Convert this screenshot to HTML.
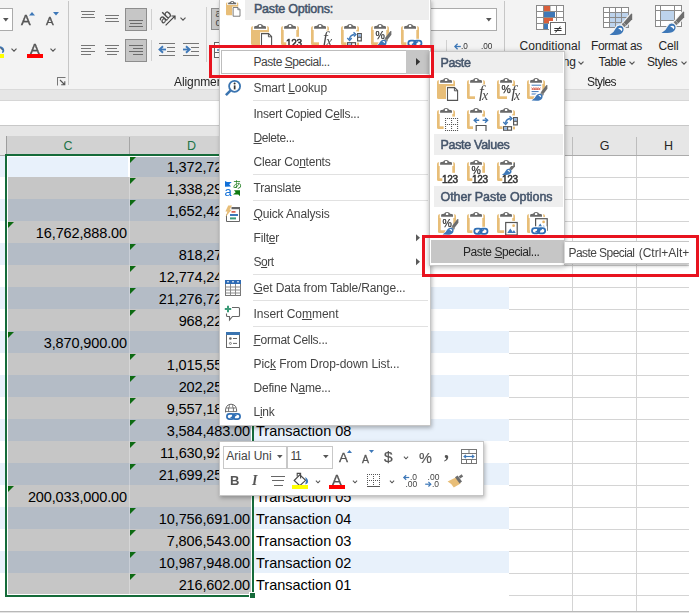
<!DOCTYPE html>
<html lang="en"><head><meta charset="utf-8"><title>Excel Paste Special</title>
<style>
html,body{margin:0;padding:0;background:#fff;}
body{width:700px;height:613px;overflow:hidden;position:relative;font-family:"Liberation Sans",sans-serif;font-size:12px;color:#444;}
.a{position:absolute;}
.t{position:absolute;white-space:nowrap;line-height:16px;height:16px;}
.ui{font-size:12px;color:#444;}
.cell{position:absolute;white-space:nowrap;font-size:14.5px;letter-spacing:0;line-height:22px;height:22px;color:#000;}
.num{text-align:right;letter-spacing:-0.12px;}
.sep{position:absolute;height:1px;background:#e1e1e1;left:253px;width:175px;}
.hd{position:absolute;font-weight:bold;color:#44546a;font-size:12.5px;line-height:16px;white-space:nowrap;}
u{text-decoration:underline;text-underline-offset:1px;text-decoration-thickness:1px;}
svg{position:absolute;overflow:visible;}
</style></head>
<body>
<div class="a" style="left:0px;top:0px;width:689px;height:89px;background:#f3f3f3;"></div>
<div class="a" style="left:0px;top:89px;width:689px;height:1px;background:#dadada;"></div>
<div class="a" style="left:0px;top:90px;width:689px;height:10px;background:#e6e6e6;"></div>
<div class="a" style="left:0px;top:100px;width:689px;height:25px;background:#fff;"></div>
<div class="a" style="left:0px;top:100px;width:689px;height:1px;background:#d6d6d6;"></div>
<div class="a" style="left:0px;top:125px;width:689px;height:1px;background:#c8c8c8;"></div>
<div class="a" style="left:0px;top:126px;width:689px;height:10px;background:#e6e6e6;"></div>
<div class="a" style="left:-2px;top:8px;width:15px;height:23px;background:#fff;border:1px solid #ababab;box-sizing:border-box;"></div>
<svg style="left:2.7px;top:17.7px;will-change:transform" width="6" height="4" viewBox="0 0 6 4" ><path d="M0 0H5.6L2.8 3.4Z" fill="#555"/></svg>
<div class="t" style="left:21px;top:12.3px;font-size:14.5px;color:#555;-webkit-text-stroke:0.4px #555;will-change:transform;">A</div>
<svg style="left:28.6px;top:12px;will-change:transform" width="6" height="3.5" viewBox="0 0 6 3.5" ><path d="M0 3.5L3 0L6 3.5Z" fill="#3e78b8"/></svg>
<div class="t" style="left:46.2px;top:13.399999999999999px;font-size:11.5px;color:#555;-webkit-text-stroke:0.4px #555;will-change:transform;">A</div>
<svg style="left:52.6px;top:12px;will-change:transform" width="6" height="3.5" viewBox="0 0 6 3.5" ><path d="M0 0H6L3 3.5Z" fill="#3e78b8"/></svg>
<svg style="left:0px;top:45px;will-change:transform" width="5" height="9" viewBox="0 0 5 9" ><path d="M0 1.2Q4.2 1.6 4.3 6Q3.8 8.2 2 8L2.4 5.2L0 2.8Z" fill="#3e78b8"/><path d="M0 2.4L2.6 5" stroke="#555" stroke-width="1" fill="none"/></svg>
<div class="a" style="left:0px;top:54px;width:4px;height:4px;background:#ffff00;"></div>
<svg style="left:11px;top:48px;will-change:transform" width="6" height="4" viewBox="0 0 6 4" ><path d="M0.5 0.6L3 3.1L5.5 0.6" fill="none" stroke="#555" stroke-width="1.15"/></svg>
<div class="t" style="left:30.3px;top:41.3px;font-size:14.5px;color:#555;-webkit-text-stroke:0.4px #555;will-change:transform;">A</div>
<div class="a" style="left:27px;top:54px;width:16px;height:4px;background:#ff0000;"></div>
<svg style="left:50px;top:48px;will-change:transform" width="6" height="4" viewBox="0 0 6 4" ><path d="M0.5 0.6L3 3.1L5.5 0.6" fill="none" stroke="#555" stroke-width="1.15"/></svg>
<svg style="left:57px;top:77px;will-change:transform" width="9" height="9" viewBox="0 0 9 9" ><path d="M0.5 3V0.5H3M0.5 0.5" fill="none" stroke="#666" stroke-width="1"/><path d="M0.5 8.5V0.5H8.5" fill="none" stroke="#777" stroke-width="1"/><path d="M3 3L7.5 7.5M7.8 4.2V7.8H4.2" fill="none" stroke="#555" stroke-width="1.1"/></svg>
<div class="a" style="left:68px;top:1px;width:1px;height:84px;background:#c6c6c6;"></div>
<div class="a" style="left:81px;top:11px;width:14px;height:1px;background:#767676;"></div>
<div class="a" style="left:82px;top:14px;width:12px;height:1px;background:#767676;"></div>
<div class="a" style="left:81px;top:17px;width:14px;height:1px;background:#767676;"></div>
<div class="a" style="left:105px;top:15px;width:14px;height:1px;background:#767676;"></div>
<div class="a" style="left:106px;top:18px;width:12px;height:1px;background:#767676;"></div>
<div class="a" style="left:105px;top:21px;width:14px;height:1px;background:#767676;"></div>
<div class="a" style="left:125px;top:8px;width:22px;height:23px;background:#c6c6c6;border:1px solid #8d8d8d;box-sizing:border-box;"></div>
<div class="a" style="left:129px;top:20px;width:14px;height:1px;background:#6a6a6a;"></div>
<div class="a" style="left:130px;top:23px;width:12px;height:1px;background:#6a6a6a;"></div>
<div class="a" style="left:129px;top:26px;width:14px;height:1px;background:#6a6a6a;"></div>
<div class="a" style="left:151px;top:9px;width:1px;height:21px;background:#d0d0d0;"></div>
<div class="a" style="left:81px;top:45px;width:14px;height:1px;background:#767676;"></div>
<div class="a" style="left:81px;top:48px;width:10px;height:1px;background:#767676;"></div>
<div class="a" style="left:81px;top:51px;width:14px;height:1px;background:#767676;"></div>
<div class="a" style="left:81px;top:54px;width:10px;height:1px;background:#767676;"></div>
<div class="a" style="left:105px;top:45px;width:14px;height:1px;background:#767676;"></div>
<div class="a" style="left:107px;top:48px;width:10px;height:1px;background:#767676;"></div>
<div class="a" style="left:105px;top:51px;width:14px;height:1px;background:#767676;"></div>
<div class="a" style="left:107px;top:54px;width:10px;height:1px;background:#767676;"></div>
<div class="a" style="left:125px;top:39px;width:22px;height:23px;background:#c6c6c6;border:1px solid #8d8d8d;box-sizing:border-box;"></div>
<div class="a" style="left:129px;top:45px;width:14px;height:1px;background:#6a6a6a;"></div>
<div class="a" style="left:133px;top:48px;width:10px;height:1px;background:#6a6a6a;"></div>
<div class="a" style="left:129px;top:51px;width:14px;height:1px;background:#6a6a6a;"></div>
<div class="a" style="left:133px;top:54px;width:10px;height:1px;background:#6a6a6a;"></div>
<div class="a" style="left:151px;top:40px;width:1px;height:21px;background:#d0d0d0;"></div>
<svg style="left:154px;top:5px;will-change:transform" width="26" height="24" viewBox="0 0 26 24" ><text x="0" y="0" transform="translate(8.9 19.2) rotate(-45)" font-family="Liberation Sans, sans-serif" font-size="12" fill="#444" stroke="#444" stroke-width="0.3">ab</text><path d="M11.6 20.4L20.6 11.4M17.4 11H21V14.6" fill="none" stroke="#444" stroke-width="1.2"/></svg>
<svg style="left:180px;top:17px;will-change:transform" width="6" height="4" viewBox="0 0 6 4" ><path d="M0.5 0.6L3 3.1L5.5 0.6" fill="none" stroke="#555" stroke-width="1.15"/></svg>
<div class="a" style="left:159px;top:43px;width:16px;height:1px;background:#767676;"></div>
<div class="a" style="left:159px;top:55px;width:16px;height:1px;background:#767676;"></div>
<div class="a" style="left:167px;top:47px;width:8px;height:1px;background:#767676;"></div>
<div class="a" style="left:167px;top:51px;width:8px;height:1px;background:#767676;"></div>
<svg style="left:159px;top:46px;will-change:transform" width="7" height="7" viewBox="0 0 7 7" ><path d="M1.6 3.5H7" stroke="#3e78b8" stroke-width="1.8" fill="none"/><path d="M4 0.2L0.5 3.5L4 6.8" fill="none" stroke="#3e78b8" stroke-width="1.9"/></svg>
<div class="a" style="left:183px;top:43px;width:16px;height:1px;background:#767676;"></div>
<div class="a" style="left:183px;top:55px;width:16px;height:1px;background:#767676;"></div>
<div class="a" style="left:191px;top:47px;width:8px;height:1px;background:#767676;"></div>
<div class="a" style="left:191px;top:51px;width:8px;height:1px;background:#767676;"></div>
<svg style="left:183px;top:46px;will-change:transform" width="7" height="7" viewBox="0 0 7 7" ><path d="M0 3.5H5.4" stroke="#3e78b8" stroke-width="1.8" fill="none"/><path d="M3 0.2L6.6 3.5L3 6.8" fill="none" stroke="#3e78b8" stroke-width="1.9"/></svg>
<div class="a" style="left:206px;top:7px;width:1px;height:55px;background:#d0d0d0;"></div>
<div class="a" style="left:211px;top:8px;width:30px;height:22px;background:#c6c6c6;border:1px solid #8d8d8d;box-sizing:border-box;"></div>
<div class="t" style="left:215.5px;top:6px;font-size:10px;color:#444;">ab</div>
<div class="t" style="left:215.5px;top:15px;font-size:10px;color:#444;">c</div>
<svg style="left:214px;top:42px;will-change:transform" width="16" height="16" viewBox="0 0 16 16" ><rect x="0.5" y="0.5" width="15" height="15" fill="#fff" stroke="#666"/><path d="M0.5 5.5H15.5M0.5 10.5H15.5" stroke="#666" fill="none"/><path d="M3 8H12" stroke="#3e78b8" stroke-width="1.4"/></svg>
<div class="t" style="left:174px;top:73.5px;font-size:12px;color:#262626;letter-spacing:-0.096px;">Alignment</div>
<div class="a" style="left:430px;top:8px;width:67px;height:23px;background:#fff;border:1px solid #ababab;box-sizing:border-box;"></div>
<svg style="left:486.2px;top:17.7px;will-change:transform" width="6" height="4" viewBox="0 0 6 4" ><path d="M0 0H5.6L2.8 3.4Z" fill="#555"/></svg>
<div class="a" style="left:446px;top:40px;width:1px;height:12px;background:#d0d0d0;"></div>
<div class="a" style="left:504px;top:1px;width:1px;height:50px;background:#c6c6c6;"></div>
<svg style="left:454px;top:42.6px;will-change:transform" width="8" height="8" viewBox="0 0 8 8" ><path d="M1.2 3.5H6.8" stroke="#3e78b8" stroke-width="1.3" fill="none"/><path d="M3.6 0.8L0.9 3.5L3.6 6.2" fill="none" stroke="#3e78b8" stroke-width="1.3"/></svg>
<div class="t" style="left:461.3px;top:38.6px;font-size:8.2px;color:#333;will-change:transform;">.0</div>
<div class="t" style="left:480.6px;top:38.6px;font-size:8.2px;color:#333;will-change:transform;">.00</div>
<div class="t" style="left:519.5px;top:38px;font-size:12px;color:#262626;letter-spacing:0.087px;">Conditional</div>
<div class="t" style="left:519px;top:54px;font-size:12px;color:#262626;letter-spacing:-0.035px;">Formatting</div>
<svg style="left:578px;top:60.5px;will-change:transform" width="6" height="4" viewBox="0 0 6 4" ><path d="M0.5 0.6L3 3.1L5.5 0.6" fill="none" stroke="#555" stroke-width="1.15"/></svg>
<div class="t" style="left:591px;top:38px;font-size:12px;color:#262626;letter-spacing:-0.335px;">Format as</div>
<div class="t" style="left:598.5px;top:54px;font-size:12px;color:#262626;letter-spacing:-0.338px;">Table</div>
<svg style="left:628.5px;top:60.5px;will-change:transform" width="6" height="4" viewBox="0 0 6 4" ><path d="M0.5 0.6L3 3.1L5.5 0.6" fill="none" stroke="#555" stroke-width="1.15"/></svg>
<div class="t" style="left:658.5px;top:38px;font-size:12px;color:#262626;letter-spacing:-0.168px;">Cell</div>
<div class="t" style="left:647px;top:54px;font-size:12px;color:#262626;letter-spacing:-0.446px;">Styles</div>
<svg style="left:680.5px;top:60.5px;will-change:transform" width="6" height="4" viewBox="0 0 6 4" ><path d="M0.5 0.6L3 3.1L5.5 0.6" fill="none" stroke="#555" stroke-width="1.15"/></svg>
<div class="t" style="left:587px;top:74px;font-size:12px;color:#262626;letter-spacing:-0.613px;">Styles</div>
<svg style="left:536px;top:5px;will-change:transform" width="31" height="31" viewBox="0 0 31 31" ><rect x="0.5" y="0.5" width="27" height="24" fill="#fff" stroke="#8a8a8a"/><path d="M7.5 0.5V24.5M14 0.5V24.5M20.5 0.5V24.5M0.5 6.5H27.5M0.5 12.5H27.5M0.5 18.5H27.5" stroke="#8a8a8a" fill="none"/><rect x="8" y="1" width="6" height="5" fill="#d95f3b"/><rect x="8" y="7" width="11" height="5" fill="#3e78b8"/><rect x="8" y="13" width="9" height="5" fill="#d95f3b"/><rect x="8" y="19" width="4" height="5" fill="#3e78b8"/><rect x="13" y="16" width="15" height="9" fill="#fff"/><rect x="14.5" y="17.5" width="15" height="12" fill="#fff" stroke="#6a6a6a"/><text x="22" y="28" text-anchor="middle" font-family="DejaVu Sans, sans-serif" font-size="11.5" fill="#333">≠</text></svg>
<svg style="left:603px;top:7px;will-change:transform" width="32" height="30" viewBox="0 0 32 30" ><rect x="0.5" y="0.5" width="25" height="20" fill="#fff" stroke="#8a8a8a"/><rect x="7" y="6" width="18" height="14" fill="#bdd3ec"/><path d="M6.5 0.5V20.5M12.5 0.5V20.5M18.5 0.5V20.5M0.5 5.5H25.5M0.5 10.5H25.5M0.5 15.5H25.5" stroke="#8a8a8a" fill="none"/><g transform="translate(6.5 6)"><path d="M14.2 9.4L21.4 0.9Q22.6 -0.2 22.7 1.4V6.2L16.8 12.4ZM12.2 11.2L13.9 9.6L16.5 12.6L14.9 14.2ZM0 22Q4.5 19.5 6.2 15.4Q8.3 11.3 12.2 13Q15.4 15.6 13.3 19Q11.5 22 6 22Z" fill="#f3f3f3" stroke="#f3f3f3" stroke-width="2.2" stroke-linejoin="round"/><path d="M14.2 9.4L21.4 0.9Q22.6 -0.2 22.7 1.4V6.2L16.8 12.4Z" fill="#6d6d6d"/><path d="M12.2 11.2L13.9 9.6L16.5 12.6L14.9 14.2Z" fill="#7a7a7a"/><path d="M0 22Q4.5 19.5 6.2 15.4Q8.3 11.3 12.2 13Q15.4 15.6 13.3 19Q11.5 22 6 22Z" fill="#3e78b8"/><path d="M8.6 15.6Q10.6 13.9 12.3 15.3Q13.4 16.8 12.2 18.2Q11 16.2 8.6 15.6Z" fill="#fff"/></g></svg>
<svg style="left:655px;top:5px;will-change:transform" width="32" height="30" viewBox="0 0 32 30" ><rect x="0.5" y="0.5" width="26" height="21" fill="#fff" stroke="#8a8a8a"/><rect x="6" y="6" width="13" height="9.5" fill="#bdd3ec"/><path d="M5.5 0.5V21.5M19.5 0.5V21.5M0.5 5.5H26.5M0.5 15.5H26.5" stroke="#8a8a8a" fill="none"/><g transform="translate(6.5 6)"><path d="M14.2 9.4L21.4 0.9Q22.6 -0.2 22.7 1.4V6.2L16.8 12.4ZM12.2 11.2L13.9 9.6L16.5 12.6L14.9 14.2ZM0 22Q4.5 19.5 6.2 15.4Q8.3 11.3 12.2 13Q15.4 15.6 13.3 19Q11.5 22 6 22Z" fill="#f3f3f3" stroke="#f3f3f3" stroke-width="2.2" stroke-linejoin="round"/><path d="M14.2 9.4L21.4 0.9Q22.6 -0.2 22.7 1.4V6.2L16.8 12.4Z" fill="#6d6d6d"/><path d="M12.2 11.2L13.9 9.6L16.5 12.6L14.9 14.2Z" fill="#7a7a7a"/><path d="M0 22Q4.5 19.5 6.2 15.4Q8.3 11.3 12.2 13Q15.4 15.6 13.3 19Q11.5 22 6 22Z" fill="#3e78b8"/><path d="M8.6 15.6Q10.6 13.9 12.3 15.3Q13.4 16.8 12.2 18.2Q11 16.2 8.6 15.6Z" fill="#fff"/></g></svg>
<div class="a" style="left:0px;top:136px;width:6px;height:19px;background:#e6e6e6;"></div>
<div class="a" style="left:0px;top:155px;width:6px;height:1px;background:#ababab;"></div>
<div class="a" style="left:6px;top:136px;width:1px;height:19px;background:#9e9e9e;"></div>
<div class="a" style="left:7px;top:136px;width:247px;height:18px;background:#d2d2d2;"></div>
<div class="a" style="left:129px;top:137px;width:1px;height:17px;background:#a6a6a6;"></div>
<div class="a" style="left:254px;top:136px;width:435px;height:19px;background:#e6e6e6;"></div>
<div class="a" style="left:254px;top:155px;width:435px;height:1px;background:#ababab;"></div>
<div class="a" style="left:572px;top:137px;width:1px;height:18px;background:#bdbdbd;"></div>
<div class="a" style="left:636px;top:137px;width:1px;height:18px;background:#bdbdbd;"></div>
<div class="t" style="left:7px;top:137px;width:122px;color:#217346;font-size:12.5px;line-height:18px;height:18px;text-align:center;">C</div>
<div class="t" style="left:130px;top:137px;width:123px;color:#217346;font-size:12.5px;line-height:18px;height:18px;text-align:center;">D</div>
<div class="t" style="left:573px;top:137px;width:63px;color:#262626;font-size:12.5px;line-height:18px;height:18px;text-align:center;">G</div>
<div class="t" style="left:637px;top:137px;width:63px;color:#262626;font-size:12.5px;line-height:18px;height:18px;text-align:center;">H</div>
<div class="a" style="left:509px;top:177px;width:180px;height:1px;background:#d4d4d4;"></div>
<div class="a" style="left:509px;top:199px;width:180px;height:1px;background:#d4d4d4;"></div>
<div class="a" style="left:509px;top:221px;width:180px;height:1px;background:#d4d4d4;"></div>
<div class="a" style="left:509px;top:243px;width:180px;height:1px;background:#d4d4d4;"></div>
<div class="a" style="left:509px;top:265px;width:180px;height:1px;background:#d4d4d4;"></div>
<div class="a" style="left:509px;top:287px;width:180px;height:1px;background:#d4d4d4;"></div>
<div class="a" style="left:509px;top:309px;width:180px;height:1px;background:#d4d4d4;"></div>
<div class="a" style="left:509px;top:331px;width:180px;height:1px;background:#d4d4d4;"></div>
<div class="a" style="left:509px;top:353px;width:180px;height:1px;background:#d4d4d4;"></div>
<div class="a" style="left:509px;top:375px;width:180px;height:1px;background:#d4d4d4;"></div>
<div class="a" style="left:509px;top:397px;width:180px;height:1px;background:#d4d4d4;"></div>
<div class="a" style="left:509px;top:419px;width:180px;height:1px;background:#d4d4d4;"></div>
<div class="a" style="left:509px;top:441px;width:180px;height:1px;background:#d4d4d4;"></div>
<div class="a" style="left:509px;top:463px;width:180px;height:1px;background:#d4d4d4;"></div>
<div class="a" style="left:509px;top:485px;width:180px;height:1px;background:#d4d4d4;"></div>
<div class="a" style="left:509px;top:507px;width:180px;height:1px;background:#d4d4d4;"></div>
<div class="a" style="left:509px;top:529px;width:180px;height:1px;background:#d4d4d4;"></div>
<div class="a" style="left:509px;top:551px;width:180px;height:1px;background:#d4d4d4;"></div>
<div class="a" style="left:509px;top:573px;width:180px;height:1px;background:#d4d4d4;"></div>
<div class="a" style="left:509px;top:595px;width:180px;height:1px;background:#d4d4d4;"></div>
<div class="a" style="left:572px;top:156px;width:1px;height:455px;background:#d4d4d4;"></div>
<div class="a" style="left:636px;top:156px;width:1px;height:455px;background:#d4d4d4;"></div>
<div class="a" style="left:0px;top:611px;width:689px;height:1px;background:#b8b8b8;"></div>
<div class="a" style="left:0px;top:612px;width:689px;height:1px;background:#e4e4e4;"></div>
<div class="a" style="left:0px;top:156px;width:5px;height:21px;background:#e8f1fb;"></div>
<div class="a" style="left:254px;top:155px;width:255px;height:22px;background:#e8f1fb;"></div>
<div class="a" style="left:7px;top:155px;width:245px;height:22px;background:#b4bcc6;"></div>
<div class="cell num" style="left:131px;top:156px;width:119px;">1,372,725.00</div>
<svg style="left:130px;top:157px" width="6" height="6" viewBox="0 0 6 6"><path d="M0 0H6L0 6Z" fill="#0d6a12"/></svg>
<div class="cell" style="left:256px;top:156px;">Transaction 20</div>
<div class="a" style="left:7px;top:177px;width:245px;height:22px;background:#c6c6c6;"></div>
<div class="cell num" style="left:131px;top:178px;width:119px;">1,338,294.00</div>
<svg style="left:130px;top:178px" width="6" height="6" viewBox="0 0 6 6"><path d="M0 0H6L0 6Z" fill="#0d6a12"/></svg>
<div class="cell" style="left:256px;top:178px;">Transaction 19</div>
<div class="a" style="left:0px;top:199px;width:5px;height:22px;background:#e8f1fb;"></div>
<div class="a" style="left:254px;top:199px;width:255px;height:22px;background:#e8f1fb;"></div>
<div class="a" style="left:7px;top:199px;width:245px;height:22px;background:#b4bcc6;"></div>
<div class="cell num" style="left:131px;top:200px;width:119px;">1,652,421.00</div>
<svg style="left:130px;top:200px" width="6" height="6" viewBox="0 0 6 6"><path d="M0 0H6L0 6Z" fill="#0d6a12"/></svg>
<div class="cell" style="left:256px;top:200px;">Transaction 18</div>
<div class="a" style="left:7px;top:221px;width:245px;height:22px;background:#c6c6c6;"></div>
<div class="cell num" style="left:8px;top:222px;width:119px;">16,762,888.00</div>
<svg style="left:8px;top:222px" width="6" height="6" viewBox="0 0 6 6"><path d="M0 0H6L0 6Z" fill="#0d6a12"/></svg>
<div class="cell" style="left:256px;top:222px;">Transaction 17</div>
<div class="a" style="left:0px;top:243px;width:5px;height:22px;background:#e8f1fb;"></div>
<div class="a" style="left:254px;top:243px;width:255px;height:22px;background:#e8f1fb;"></div>
<div class="a" style="left:7px;top:243px;width:245px;height:22px;background:#b4bcc6;"></div>
<div class="cell num" style="left:131px;top:244px;width:119px;">818,273.00</div>
<svg style="left:130px;top:244px" width="6" height="6" viewBox="0 0 6 6"><path d="M0 0H6L0 6Z" fill="#0d6a12"/></svg>
<div class="cell" style="left:256px;top:244px;">Transaction 16</div>
<div class="a" style="left:7px;top:265px;width:245px;height:22px;background:#c6c6c6;"></div>
<div class="cell num" style="left:131px;top:266px;width:119px;">12,774,245.00</div>
<svg style="left:130px;top:266px" width="6" height="6" viewBox="0 0 6 6"><path d="M0 0H6L0 6Z" fill="#0d6a12"/></svg>
<div class="cell" style="left:256px;top:266px;">Transaction 15</div>
<div class="a" style="left:0px;top:287px;width:5px;height:22px;background:#e8f1fb;"></div>
<div class="a" style="left:254px;top:287px;width:255px;height:22px;background:#e8f1fb;"></div>
<div class="a" style="left:7px;top:287px;width:245px;height:22px;background:#b4bcc6;"></div>
<div class="cell num" style="left:131px;top:288px;width:119px;">21,276,728.00</div>
<svg style="left:130px;top:288px" width="6" height="6" viewBox="0 0 6 6"><path d="M0 0H6L0 6Z" fill="#0d6a12"/></svg>
<div class="cell" style="left:256px;top:288px;">Transaction 14</div>
<div class="a" style="left:7px;top:309px;width:245px;height:22px;background:#c6c6c6;"></div>
<div class="cell num" style="left:131px;top:310px;width:119px;">968,226.00</div>
<svg style="left:130px;top:310px" width="6" height="6" viewBox="0 0 6 6"><path d="M0 0H6L0 6Z" fill="#0d6a12"/></svg>
<div class="cell" style="left:256px;top:310px;">Transaction 13</div>
<div class="a" style="left:0px;top:331px;width:5px;height:22px;background:#e8f1fb;"></div>
<div class="a" style="left:254px;top:331px;width:255px;height:22px;background:#e8f1fb;"></div>
<div class="a" style="left:7px;top:331px;width:245px;height:22px;background:#b4bcc6;"></div>
<div class="cell num" style="left:8px;top:332px;width:119px;">3,870,900.00</div>
<svg style="left:8px;top:332px" width="6" height="6" viewBox="0 0 6 6"><path d="M0 0H6L0 6Z" fill="#0d6a12"/></svg>
<div class="cell" style="left:256px;top:332px;">Transaction 12</div>
<div class="a" style="left:7px;top:353px;width:245px;height:22px;background:#c6c6c6;"></div>
<div class="cell num" style="left:131px;top:354px;width:119px;">1,015,553.00</div>
<svg style="left:130px;top:354px" width="6" height="6" viewBox="0 0 6 6"><path d="M0 0H6L0 6Z" fill="#0d6a12"/></svg>
<div class="cell" style="left:256px;top:354px;">Transaction 11</div>
<div class="a" style="left:0px;top:375px;width:5px;height:22px;background:#e8f1fb;"></div>
<div class="a" style="left:254px;top:375px;width:255px;height:22px;background:#e8f1fb;"></div>
<div class="a" style="left:7px;top:375px;width:245px;height:22px;background:#b4bcc6;"></div>
<div class="cell num" style="left:131px;top:376px;width:119px;">202,257.00</div>
<svg style="left:130px;top:376px" width="6" height="6" viewBox="0 0 6 6"><path d="M0 0H6L0 6Z" fill="#0d6a12"/></svg>
<div class="cell" style="left:256px;top:376px;">Transaction 10</div>
<div class="a" style="left:7px;top:397px;width:245px;height:22px;background:#c6c6c6;"></div>
<div class="cell num" style="left:131px;top:398px;width:119px;">9,557,184.00</div>
<svg style="left:130px;top:398px" width="6" height="6" viewBox="0 0 6 6"><path d="M0 0H6L0 6Z" fill="#0d6a12"/></svg>
<div class="cell" style="left:256px;top:398px;">Transaction 09</div>
<div class="a" style="left:0px;top:419px;width:5px;height:22px;background:#e8f1fb;"></div>
<div class="a" style="left:254px;top:419px;width:255px;height:22px;background:#e8f1fb;"></div>
<div class="a" style="left:7px;top:419px;width:245px;height:22px;background:#b4bcc6;"></div>
<div class="cell num" style="left:131px;top:420px;width:119px;">3,584,483.00</div>
<svg style="left:130px;top:420px" width="6" height="6" viewBox="0 0 6 6"><path d="M0 0H6L0 6Z" fill="#0d6a12"/></svg>
<div class="cell" style="left:256px;top:420px;">Transaction 08</div>
<div class="a" style="left:7px;top:441px;width:245px;height:22px;background:#c6c6c6;"></div>
<div class="cell num" style="left:131px;top:442px;width:119px;">11,630,921.00</div>
<svg style="left:130px;top:442px" width="6" height="6" viewBox="0 0 6 6"><path d="M0 0H6L0 6Z" fill="#0d6a12"/></svg>
<div class="cell" style="left:256px;top:442px;">Transaction 07</div>
<div class="a" style="left:0px;top:463px;width:5px;height:22px;background:#e8f1fb;"></div>
<div class="a" style="left:254px;top:463px;width:255px;height:22px;background:#e8f1fb;"></div>
<div class="a" style="left:7px;top:463px;width:245px;height:22px;background:#b4bcc6;"></div>
<div class="cell num" style="left:131px;top:464px;width:119px;">21,699,256.00</div>
<svg style="left:130px;top:464px" width="6" height="6" viewBox="0 0 6 6"><path d="M0 0H6L0 6Z" fill="#0d6a12"/></svg>
<div class="cell" style="left:256px;top:464px;">Transaction 06</div>
<div class="a" style="left:7px;top:485px;width:245px;height:22px;background:#c6c6c6;"></div>
<div class="cell num" style="left:8px;top:486px;width:119px;">200,033,000.00</div>
<svg style="left:8px;top:486px" width="6" height="6" viewBox="0 0 6 6"><path d="M0 0H6L0 6Z" fill="#0d6a12"/></svg>
<div class="cell" style="left:256px;top:486px;">Transaction 05</div>
<div class="a" style="left:0px;top:507px;width:5px;height:22px;background:#e8f1fb;"></div>
<div class="a" style="left:254px;top:507px;width:255px;height:22px;background:#e8f1fb;"></div>
<div class="a" style="left:7px;top:507px;width:245px;height:22px;background:#b4bcc6;"></div>
<div class="cell num" style="left:131px;top:508px;width:119px;">10,756,691.00</div>
<svg style="left:130px;top:508px" width="6" height="6" viewBox="0 0 6 6"><path d="M0 0H6L0 6Z" fill="#0d6a12"/></svg>
<div class="cell" style="left:256px;top:508px;">Transaction 04</div>
<div class="a" style="left:7px;top:529px;width:245px;height:22px;background:#c6c6c6;"></div>
<div class="cell num" style="left:131px;top:530px;width:119px;">7,806,543.00</div>
<svg style="left:130px;top:530px" width="6" height="6" viewBox="0 0 6 6"><path d="M0 0H6L0 6Z" fill="#0d6a12"/></svg>
<div class="cell" style="left:256px;top:530px;">Transaction 03</div>
<div class="a" style="left:0px;top:551px;width:5px;height:22px;background:#e8f1fb;"></div>
<div class="a" style="left:254px;top:551px;width:255px;height:22px;background:#e8f1fb;"></div>
<div class="a" style="left:7px;top:551px;width:245px;height:22px;background:#b4bcc6;"></div>
<div class="cell num" style="left:131px;top:552px;width:119px;">10,987,948.00</div>
<svg style="left:130px;top:552px" width="6" height="6" viewBox="0 0 6 6"><path d="M0 0H6L0 6Z" fill="#0d6a12"/></svg>
<div class="cell" style="left:256px;top:552px;">Transaction 02</div>
<div class="a" style="left:7px;top:573px;width:245px;height:22px;background:#c6c6c6;"></div>
<div class="cell num" style="left:131px;top:574px;width:119px;">216,602.00</div>
<svg style="left:130px;top:574px" width="6" height="6" viewBox="0 0 6 6"><path d="M0 0H6L0 6Z" fill="#0d6a12"/></svg>
<div class="cell" style="left:256px;top:574px;">Transaction 01</div>
<div class="a" style="left:129px;top:157px;width:1px;height:437px;background:rgba(255,255,255,0.28);"></div>
<div class="a" style="left:7px;top:156px;width:122px;height:21px;background:#fff;"></div>
<div class="a" style="left:8px;top:157px;width:120px;height:20px;background:#e8f1fb;"></div>
<div class="a" style="left:128px;top:156px;width:2px;height:21px;background:#fff;"></div>
<div class="a" style="left:5px;top:154px;width:249px;height:2px;background:#156b3a;"></div>
<div class="a" style="left:5px;top:154px;width:2px;height:443px;background:#156b3a;"></div>
<div class="a" style="left:252px;top:154px;width:2px;height:440px;background:#156b3a;"></div>
<div class="a" style="left:5px;top:595px;width:245px;height:2px;background:#156b3a;"></div>
<div class="a" style="left:7px;top:594px;width:243px;height:1px;background:#fff;"></div>
<div class="a" style="left:7px;top:156px;width:1px;height:438px;background:#fff;"></div>
<div class="a" style="left:7px;top:156px;width:245px;height:1px;background:#fff;"></div>
<div class="a" style="left:251px;top:156px;width:1px;height:437px;background:#fff;"></div>
<div class="a" style="left:249px;top:592px;width:6px;height:6px;background:#fff;"></div>
<div class="a" style="left:250px;top:593px;width:5px;height:5px;background:#156b3a;"></div>
<div class="a" style="left:219px;top:441px;width:265px;height:55px;background:#fff;border:1px solid #c6c6c6;box-sizing:border-box;box-shadow:1px 2px 4px rgba(0,0,0,0.28);"></div>
<div class="a" style="left:223px;top:446px;width:64px;height:23px;background:#fff;border:1px solid #c8c8c8;box-sizing:border-box;"></div>
<div class="a" style="left:287px;top:446px;width:46px;height:23px;background:#fff;border:1px solid #c8c8c8;box-sizing:border-box;"></div>
<div class="a" style="left:224px;top:447px;width:47.6px;height:21px;overflow:hidden;"><div class="t" style="left:2.3px;top:0.5px;font-size:12px;color:#444;letter-spacing:0px;">Arial Unicode MS</div></div>
<svg style="left:276.7px;top:455px;will-change:transform" width="6" height="4" viewBox="0 0 6 4" ><path d="M0 0H5.6L2.8 3.2Z" fill="#555"/></svg>
<div class="t" style="left:290.5px;top:447.5px;font-size:12px;color:#444;letter-spacing:-1.229px;">11</div>
<svg style="left:323.2px;top:455px;will-change:transform" width="6" height="4" viewBox="0 0 6 4" ><path d="M0 0H5.6L2.8 3.2Z" fill="#555"/></svg>
<div class="t" style="left:339px;top:450px;font-size:13.5px;color:#555;-webkit-text-stroke:0.3px #555;will-change:transform;">A</div>
<svg style="left:347px;top:450px;will-change:transform" width="5" height="3" viewBox="0 0 5 3" ><path d="M0 3L2.5 0L5 3Z" fill="#3e78b8"/></svg>
<div class="t" style="left:362px;top:451px;font-size:10.5px;color:#555;-webkit-text-stroke:0.3px #555;will-change:transform;">A</div>
<svg style="left:369px;top:450px;will-change:transform" width="5" height="3" viewBox="0 0 5 3" ><path d="M0 0H5L2.5 3Z" fill="#3e78b8"/></svg>
<div class="t" style="left:384.3px;top:449px;font-size:15.5px;color:#555;-webkit-text-stroke:0.25px #555;will-change:transform;">$</div>
<svg style="left:403px;top:455.7px;will-change:transform" width="6" height="4" viewBox="0 0 6 4" ><path d="M0.9 0.7L3 2.8L5.1 0.7" fill="none" stroke="#555" stroke-width="1.05"/></svg>
<div class="t" style="left:419px;top:449.5px;font-size:14.5px;color:#555;-webkit-text-stroke:0.2px #555;will-change:transform;">%</div>
<div class="t" style="left:443.8px;top:443.2px;font-size:20px;color:#555;font-weight:bold;font-family:Liberation Serif,serif;will-change:transform;">,</div>
<svg style="left:461px;top:449px;will-change:transform" width="16" height="15" viewBox="0 0 16 15" ><rect x="0.5" y="0.5" width="15" height="14" fill="#fff" stroke="#777"/><path d="M0.5 4.5H15.5M0.5 10.5H15.5M8 0.5V4.5M5.5 10.5V14.5M10.5 10.5V14.5" stroke="#777" fill="none"/><path d="M3.5 7.5H12.5" stroke="#3e78b8" stroke-width="1.1"/><path d="M5 5.8L3 7.5L5 9.2M11 5.8L13 7.5L11 9.2" fill="none" stroke="#3e78b8" stroke-width="1.1"/></svg>
<div class="t" style="left:229.5px;top:472.5px;font-size:13px;color:#555;font-weight:bold;will-change:transform;">B</div>
<div class="t" style="left:252.3px;top:472.5px;font-size:14px;color:#555;font-weight:bold;font-family:Liberation Serif,serif;font-style:italic;will-change:transform;">I</div>
<div class="a" style="left:271px;top:476px;width:14px;height:1px;background:#666;"></div>
<div class="a" style="left:272px;top:480px;width:12px;height:1px;background:#666;"></div>
<div class="a" style="left:274px;top:485px;width:9px;height:1px;background:#666;"></div>
<svg style="left:292px;top:472px;will-change:transform" width="17" height="14" viewBox="0 0 17 14" ><path d="M2.2 8.5L7.8 2.9L13.6 8.3L7.8 13.6Z" fill="#fff" stroke="#4a4a4a" stroke-width="1.15"/><path d="M5.2 4.4V1.4H8.6V6.4" fill="none" stroke="#4a4a4a" stroke-width="1.1"/><path d="M13.2 5Q17 7.6 15.8 10.8Q14.8 12.6 13.2 12.2Q14.8 9 13.2 5Z" fill="#3e78b8"/></svg>
<div class="a" style="left:292px;top:485px;width:16px;height:4px;background:#ffff00;"></div>
<svg style="left:315px;top:479.7px;will-change:transform" width="6" height="4" viewBox="0 0 6 4" ><path d="M0.9 0.7L3 2.8L5.1 0.7" fill="none" stroke="#555" stroke-width="1.05"/></svg>
<div class="t" style="left:332.2px;top:472.3px;font-size:14.5px;color:#555;-webkit-text-stroke:0.3px #555;will-change:transform;">A</div>
<div class="a" style="left:329px;top:485px;width:16px;height:4px;background:#ff0000;"></div>
<svg style="left:352px;top:479.7px;will-change:transform" width="6" height="4" viewBox="0 0 6 4" ><path d="M0.9 0.7L3 2.8L5.1 0.7" fill="none" stroke="#555" stroke-width="1.05"/></svg>
<svg style="left:367px;top:474px;will-change:transform" width="14" height="13" viewBox="0 0 14 13" ><g fill="none" stroke="#555" stroke-width="1" stroke-dasharray="1 1"><path d="M0 0.5H13M0 6.5H13"/><path d="M0.5 0V12M6.5 0V12M12.5 0V12"/></g><path d="M0 12.5H13" stroke="#555" stroke-width="1"/></svg>
<svg style="left:389px;top:479.7px;will-change:transform" width="6" height="4" viewBox="0 0 6 4" ><path d="M0.9 0.7L3 2.8L5.1 0.7" fill="none" stroke="#555" stroke-width="1.05"/></svg>
<svg style="left:403px;top:474px;will-change:transform" width="16" height="14" viewBox="0 0 16 14" ><path d="M1 3.5H6.2" stroke="#3e78b8" stroke-width="1.2"/><path d="M3.2 1.2L0.8 3.5L3.2 5.8" fill="none" stroke="#3e78b8" stroke-width="1.2"/><text x="7" y="6.2" font-family="Liberation Sans, sans-serif" font-size="8.5" fill="#444">.0</text><text x="2.4" y="13" font-family="Liberation Sans, sans-serif" font-size="8.5" fill="#444">.00</text></svg>
<svg style="left:425px;top:474px;will-change:transform" width="16" height="14" viewBox="0 0 16 14" ><path d="M0.2 10.2H5.4" stroke="#3e78b8" stroke-width="1.2"/><path d="M3.4 7.9L5.8 10.2L3.4 12.5" fill="none" stroke="#3e78b8" stroke-width="1.2"/><text x="2.6" y="6.2" font-family="Liberation Sans, sans-serif" font-size="8.5" fill="#444">.00</text><text x="7" y="13" font-family="Liberation Sans, sans-serif" font-size="8.5" fill="#444">.0</text></svg>
<svg style="left:447px;top:473px;will-change:transform" width="17" height="16" viewBox="0 0 17 16" ><path d="M0.6 8.6L8.8 4.4L13.6 10.6L6.8 14.6Q4.4 10.4 0.6 8.6Z" fill="#e8be78"/><path d="M8 4.2L10.6 2.6L15 8.6L12.6 10.4Z" fill="#6d6d6d"/><path d="M11.6 3.4L14.6 1.2L16.2 3.4L13.2 5.6Z" fill="#6d6d6d"/></svg>
<div class="a" style="left:219px;top:-1px;width:210px;height:425px;background:#fff;border:1px solid #c6c6c6;box-sizing:content-box;box-shadow:1px 2px 4px rgba(0,0,0,0.28);"></div>
<div class="a" style="left:245px;top:0px;width:184px;height:20px;background:#eeeeee;"></div>
<div class="t" style="left:254px;top:0.6999999999999993px;font-size:12.5px;color:#44546a;letter-spacing:-0.213px;-webkit-text-stroke:0.5px #44546a;">Paste Options:</div>
<svg style="left:226px;top:1px;will-change:transform" width="16" height="17" viewBox="0 0 16 17" ><g transform="scale(0.68)"><rect x="0" y="2.2" width="18" height="18.8" rx="1.6" fill="#e8be78"/><path d="M3.1 4.7V3.3Q3.1 2.2 4.4 2.1L6.1 1.7Q6.6 0.1 9.1 0.1Q11.6 0.1 12.1 1.7L13.7 2.1Q15 2.2 15 3.3V4.7Z" fill="#fff" stroke="#fff" stroke-width="2.6"/><path fill="#6a6a6a" fill-rule="evenodd" d="M3.1 4.7V3.3Q3.1 2.2 4.4 2.1L6.1 1.7Q6.6 0.1 9.1 0.1Q11.6 0.1 12.1 1.7L13.7 2.1Q15 2.2 15 3.3V4.7ZM8.6 1.1H9.6Q10.3 1.1 10.3 1.8V2.9H7.9V1.8Q7.9 1.1 8.6 1.1Z"/><rect x="9" y="8.3" width="13" height="15" fill="#fff"/><path d="M10.5 9.6H17.6L20.6 12.6V22.4H10.5Z" fill="#fff" stroke="#555" stroke-width="1.1"/><path d="M17.4 9.8V12.8H20.4" fill="none" stroke="#555" stroke-width="1"/></g></svg>
<svg style="left:251px;top:24px;will-change:transform" width="24" height="25" viewBox="0 0 24 25" ><rect x="0" y="2.2" width="18" height="18.8" rx="1.6" fill="#e8be78"/><path d="M3.1 4.7V3.3Q3.1 2.2 4.4 2.1L6.1 1.7Q6.6 0.1 9.1 0.1Q11.6 0.1 12.1 1.7L13.7 2.1Q15 2.2 15 3.3V4.7Z" fill="#fff" stroke="#fff" stroke-width="2.6"/><path fill="#6a6a6a" fill-rule="evenodd" d="M3.1 4.7V3.3Q3.1 2.2 4.4 2.1L6.1 1.7Q6.6 0.1 9.1 0.1Q11.6 0.1 12.1 1.7L13.7 2.1Q15 2.2 15 3.3V4.7ZM8.6 1.1H9.6Q10.3 1.1 10.3 1.8V2.9H7.9V1.8Q7.9 1.1 8.6 1.1Z"/><rect x="9" y="8.3" width="13" height="15" fill="#fff"/><path d="M10.5 9.6H17.6L20.6 12.6V22.4H10.5Z" fill="#fff" stroke="#555" stroke-width="1.1"/><path d="M17.4 9.8V12.8H20.4" fill="none" stroke="#555" stroke-width="1"/></svg>
<svg style="left:281px;top:24px;will-change:transform" width="24" height="25" viewBox="0 0 24 25" ><rect x="0" y="2.2" width="18" height="18.8" rx="1.6" fill="#e8be78"/><rect x="2.7" y="4" width="12.6" height="14.3" fill="#fff"/><rect x="5.3" y="12.8" width="17" height="11.2" fill="#fff"/><text x="5.1" y="22.9" font-family="Liberation Sans, sans-serif" font-size="10" fill="#333" stroke="#333" stroke-width="0.5" letter-spacing="-0.3">123</text><path d="M3.1 4.7V3.3Q3.1 2.2 4.4 2.1L6.1 1.7Q6.6 0.1 9.1 0.1Q11.6 0.1 12.1 1.7L13.7 2.1Q15 2.2 15 3.3V4.7Z" fill="#fff" stroke="#fff" stroke-width="2.6"/><path fill="#6a6a6a" fill-rule="evenodd" d="M3.1 4.7V3.3Q3.1 2.2 4.4 2.1L6.1 1.7Q6.6 0.1 9.1 0.1Q11.6 0.1 12.1 1.7L13.7 2.1Q15 2.2 15 3.3V4.7ZM8.6 1.1H9.6Q10.3 1.1 10.3 1.8V2.9H7.9V1.8Q7.9 1.1 8.6 1.1Z"/></svg>
<svg style="left:311px;top:24px;will-change:transform" width="24" height="25" viewBox="0 0 24 25" ><rect x="0" y="2.2" width="18" height="18.8" rx="1.6" fill="#e8be78"/><rect x="2.7" y="4" width="12.6" height="14.3" fill="#fff"/><rect x="8" y="6.5" width="14" height="17" fill="#fff"/><text x="12" y="18.8" font-family="Liberation Serif, serif" font-style="italic" font-size="17" fill="#4a4a4a">f</text><text x="14.9" y="21.7" font-family="Liberation Serif, serif" font-style="italic" font-size="14" fill="#4a4a4a">x</text><path d="M3.1 4.7V3.3Q3.1 2.2 4.4 2.1L6.1 1.7Q6.6 0.1 9.1 0.1Q11.6 0.1 12.1 1.7L13.7 2.1Q15 2.2 15 3.3V4.7Z" fill="#fff" stroke="#fff" stroke-width="2.6"/><path fill="#6a6a6a" fill-rule="evenodd" d="M3.1 4.7V3.3Q3.1 2.2 4.4 2.1L6.1 1.7Q6.6 0.1 9.1 0.1Q11.6 0.1 12.1 1.7L13.7 2.1Q15 2.2 15 3.3V4.7ZM8.6 1.1H9.6Q10.3 1.1 10.3 1.8V2.9H7.9V1.8Q7.9 1.1 8.6 1.1Z"/></svg>
<svg style="left:341px;top:24px;will-change:transform" width="24" height="25" viewBox="0 0 24 25" ><rect x="0" y="2.2" width="18" height="18.8" rx="1.6" fill="#e8be78"/><rect x="2.7" y="4" width="12.6" height="14.3" fill="#fff"/><rect x="5.5" y="7.5" width="17" height="16" fill="#fff"/><path d="M8.6 15.2Q8.7 11 13.6 10.5" fill="none" stroke="#3e78b8" stroke-width="1.4"/><path d="M12.5 8.4L14.9 10.5L12.9 12.6" fill="none" stroke="#3e78b8" stroke-width="1.4"/><path d="M6.3 14L8.6 16.4L10.7 14" fill="none" stroke="#3e78b8" stroke-width="1.4"/><rect x="16.6" y="9.6" width="3.7" height="7.3" fill="#fff" stroke="#555" stroke-width="1.2"/><rect x="17.2" y="10.2" width="2.5" height="2.8" fill="#8eb4e3"/><path d="M16.6 13.3H20.3" stroke="#555" stroke-width="1.1"/><rect x="6.6" y="18.7" width="7.9" height="3.5" fill="#fff" stroke="#555" stroke-width="1.2"/><rect x="7.2" y="19.3" width="3" height="2.3" fill="#8eb4e3"/><path d="M10.6 18.7V22.2" stroke="#555" stroke-width="1.1"/><rect x="16" y="18.6" width="2" height="2.8" fill="#e8be78"/><path d="M3.1 4.7V3.3Q3.1 2.2 4.4 2.1L6.1 1.7Q6.6 0.1 9.1 0.1Q11.6 0.1 12.1 1.7L13.7 2.1Q15 2.2 15 3.3V4.7Z" fill="#fff" stroke="#fff" stroke-width="2.6"/><path fill="#6a6a6a" fill-rule="evenodd" d="M3.1 4.7V3.3Q3.1 2.2 4.4 2.1L6.1 1.7Q6.6 0.1 9.1 0.1Q11.6 0.1 12.1 1.7L13.7 2.1Q15 2.2 15 3.3V4.7ZM8.6 1.1H9.6Q10.3 1.1 10.3 1.8V2.9H7.9V1.8Q7.9 1.1 8.6 1.1Z"/></svg>
<svg style="left:371px;top:24px;will-change:transform" width="24" height="25" viewBox="0 0 24 25" ><rect x="0" y="2.2" width="18" height="18.8" rx="1.6" fill="#e8be78"/><rect x="2.7" y="4" width="12.6" height="14.3" fill="#fff"/><text x="4.5" y="15" font-family="Liberation Sans, sans-serif" font-size="10.5" fill="#333" stroke="#333" stroke-width="0.25">%</text><path d="M11.5 19L20 6H22V22H11.5Z" fill="#fff"/><path d="M5 23L9 15.5L17 16L15 23Z" fill="#fff"/><g transform="translate(0 0)"><path d="M13.6 14.6L19.2 7.2Q20.2 6.4 20.4 7.6V10.8L16 16.6Z" fill="#6d6d6d"/><path d="M13.2 15.6L14.6 14.3L16.9 16.3L15.9 17.9Z" fill="#8a8a8a"/><path d="M4.6 22.6Q8 20.6 9.3 17.6Q11.2 14.9 14.3 16.1Q16.5 17.9 15.1 20.4Q13.6 22.8 9.5 22.8Z" fill="#3e78b8"/><path d="M11.2 17.4Q12.8 16.6 13.9 17.6Q14.4 18.6 13.6 19.3Q12.8 18 11.2 17.4Z" fill="#fff"/></g><path d="M3.1 4.7V3.3Q3.1 2.2 4.4 2.1L6.1 1.7Q6.6 0.1 9.1 0.1Q11.6 0.1 12.1 1.7L13.7 2.1Q15 2.2 15 3.3V4.7Z" fill="#fff" stroke="#fff" stroke-width="2.6"/><path fill="#6a6a6a" fill-rule="evenodd" d="M3.1 4.7V3.3Q3.1 2.2 4.4 2.1L6.1 1.7Q6.6 0.1 9.1 0.1Q11.6 0.1 12.1 1.7L13.7 2.1Q15 2.2 15 3.3V4.7ZM8.6 1.1H9.6Q10.3 1.1 10.3 1.8V2.9H7.9V1.8Q7.9 1.1 8.6 1.1Z"/></svg>
<svg style="left:401px;top:24px;will-change:transform" width="24" height="25" viewBox="0 0 24 25" ><rect x="0" y="2.2" width="18" height="18.8" rx="1.6" fill="#e8be78"/><rect x="2.7" y="4" width="12.6" height="14.3" fill="#fff"/><rect x="5.4" y="14.8" width="17" height="9" fill="#fff"/><g transform="translate(0 0)" fill="none" stroke="#2f6fb5" stroke-width="1.75"><rect x="7.3" y="16.6" width="7.4" height="5.2" rx="2.6"/><rect x="13.1" y="16.6" width="7.4" height="5.2" rx="2.6"/></g><path d="M10.8 20.7L17 17.7" stroke="#2f6fb5" stroke-width="1.4"/><path d="M3.1 4.7V3.3Q3.1 2.2 4.4 2.1L6.1 1.7Q6.6 0.1 9.1 0.1Q11.6 0.1 12.1 1.7L13.7 2.1Q15 2.2 15 3.3V4.7Z" fill="#fff" stroke="#fff" stroke-width="2.6"/><path fill="#6a6a6a" fill-rule="evenodd" d="M3.1 4.7V3.3Q3.1 2.2 4.4 2.1L6.1 1.7Q6.6 0.1 9.1 0.1Q11.6 0.1 12.1 1.7L13.7 2.1Q15 2.2 15 3.3V4.7ZM8.6 1.1H9.6Q10.3 1.1 10.3 1.8V2.9H7.9V1.8Q7.9 1.1 8.6 1.1Z"/></svg>
<div class="a" style="left:221px;top:50px;width:206px;height:22px;background:#fff;border:1px solid #bdbdbd;box-sizing:content-box;"></div>
<div class="a" style="left:406px;top:50px;width:23px;height:24px;background:#c6c6c6;"></div>
<svg style="left:416px;top:58px;will-change:transform" width="5" height="8" viewBox="0 0 5 8" ><path d="M0 0L4.2 3.75L0 7.5Z" fill="#333"/></svg>
<div class="t" style="left:253.5px;top:54px;font-size:12px;color:#444;letter-spacing:-0.461px;">Paste <u>S</u>pecial...</div>
<div class="t" style="left:253.5px;top:80px;font-size:12px;color:#444;letter-spacing:-0.101px;">Smart <u>L</u>ookup</div>
<div class="t" style="left:253.5px;top:106px;font-size:12px;color:#444;letter-spacing:-0.245px;">Insert Copied C<u>e</u>lls...</div>
<div class="t" style="left:253.5px;top:130px;font-size:12px;color:#444;letter-spacing:-0.410px;"><u>D</u>elete...</div>
<div class="t" style="left:253.5px;top:154px;font-size:12px;color:#444;letter-spacing:-0.217px;">Clear Co<u>n</u>tents</div>
<div class="t" style="left:253.5px;top:180px;font-size:12px;color:#444;letter-spacing:-0.231px;">Translate</div>
<div class="t" style="left:253.5px;top:206px;font-size:12px;color:#444;letter-spacing:-0.145px;"><u>Q</u>uick Analysis</div>
<div class="t" style="left:253.5px;top:230px;font-size:12px;color:#444;letter-spacing:-0.178px;">Filt<u>e</u>r</div>
<div class="t" style="left:253.5px;top:254px;font-size:12px;color:#444;letter-spacing:-0.502px;">S<u>o</u>rt</div>
<div class="t" style="left:253.5px;top:280px;font-size:12px;color:#444;letter-spacing:-0.138px;"><u>G</u>et Data from Table/Range...</div>
<div class="t" style="left:253.5px;top:306px;font-size:12px;color:#444;letter-spacing:-0.026px;">Insert Co<u>m</u>ment</div>
<div class="t" style="left:253.5px;top:332px;font-size:12px;color:#444;letter-spacing:-0.267px;"><u>F</u>ormat Cells...</div>
<div class="t" style="left:253.5px;top:356px;font-size:12px;color:#444;letter-spacing:-0.075px;">Pic<u>k</u> From Drop-down List...</div>
<div class="t" style="left:253.5px;top:380px;font-size:12px;color:#444;letter-spacing:-0.217px;">Define N<u>a</u>me...</div>
<div class="t" style="left:253.5px;top:404px;font-size:12px;color:#444;letter-spacing:-0.253px;">L<u>i</u>nk</div>
<div class="sep" style="top:100px"></div>
<div class="sep" style="top:174px"></div>
<div class="sep" style="top:200px"></div>
<div class="sep" style="top:274px"></div>
<div class="sep" style="top:300px"></div>
<div class="sep" style="top:326px"></div>
<svg style="left:416px;top:234px;will-change:transform" width="5" height="8" viewBox="0 0 5 8" ><path d="M0 0.3L4 3.8L0 7.3Z" fill="#5a5a5a"/></svg>
<svg style="left:416px;top:258px;will-change:transform" width="5" height="8" viewBox="0 0 5 8" ><path d="M0 0.3L4 3.8L0 7.3Z" fill="#5a5a5a"/></svg>
<svg style="left:223px;top:78px;will-change:transform" width="20" height="20" viewBox="0 0 20 20" ><circle cx="11.6" cy="8.3" r="5.5" fill="#fff" stroke="#3a74b0" stroke-width="1.8"/><path d="M7.4 12.6L2.9 17.1" stroke="#3a74b0" stroke-width="2.6" fill="none"/><circle cx="11.6" cy="5.6" r="1" fill="#333"/><rect x="10.8" y="7.4" width="1.7" height="4" fill="#333"/></svg>
<svg style="left:224px;top:179px;will-change:transform" width="18" height="18" viewBox="0 0 18 18" ><path d="M1 2L3 3L7.8 3L5.2 5.3L7 7.6L1 7.8Z" fill="#1170d8"/><text x="0.6" y="17" font-family="Liberation Sans, sans-serif" font-size="13" fill="#1170d8">a</text><text x="8.6" y="9.3" font-family="Noto Sans CJK JP, sans-serif" font-size="9.5" fill="#1a7a1a">あ</text><path d="M10 11.3L16 11.3L16 17.2L14.3 15.6L9 15.4L11.7 13.2Z" fill="#0f7a0f"/></svg>
<svg style="left:224px;top:205px;will-change:transform" width="18" height="18" viewBox="0 0 18 18" ><path d="M2.5 9.5V16.5H15.5V2.5H8" fill="none" stroke="#666" stroke-width="1"/><rect x="7.5" y="2" width="8.5" height="2.2" fill="#666"/><rect x="7.5" y="6.2" width="4" height="1.4" fill="#d2402a"/><rect x="6" y="9" width="8" height="2" fill="#3e78b8"/><rect x="6" y="12.4" width="6" height="2" fill="#3c9b78"/><path d="M4.2 0.6L8 0.6L5.6 4.8L7.6 4.8L1.6 12L3.4 6.4L1.4 6.4Z" fill="#e8be78"/></svg>
<svg style="left:225px;top:280px;will-change:transform" width="16" height="16" viewBox="0 0 16 16" ><rect x="0.5" y="0.5" width="15" height="15" fill="#fff" stroke="#777"/><path d="M5.5 4V15.5M10.5 4V15.5M0.5 7H15.5M0.5 10H15.5M0.5 13H15.5" stroke="#8a8a8a" fill="none"/><rect x="0" y="0" width="16" height="4" fill="#2e6bb5"/><path d="M2 1.8H4M7 1.8H9M12 1.8H14" stroke="#fff" stroke-width="1"/></svg>
<svg style="left:224px;top:305px;will-change:transform" width="18" height="18" viewBox="0 0 18 18" ><path d="M8 2.5H14.5Q15.5 2.5 15.5 3.5V10.5Q15.5 11.5 14.5 11.5H8.5L5.5 15V11.5H3.5Q2.5 11.5 2.5 10.5V8.5" fill="none" stroke="#666" stroke-width="1.1"/><path d="M4 0.8V7.2M0.8 4H7.2" stroke="#3c9b78" stroke-width="2" fill="none"/></svg>
<svg style="left:226px;top:332px;will-change:transform" width="14" height="16" viewBox="0 0 14 16" ><rect x="0.5" y="0.5" width="13" height="15" fill="#fff" stroke="#666"/><rect x="0" y="0" width="14" height="3" fill="#3a74b0"/><circle cx="4.4" cy="6.5" r="1.3" fill="#666"/><circle cx="4.4" cy="11.4" r="1" fill="#fff" stroke="#666" stroke-width="0.8"/><path d="M7 6.5H11M7 11.4H11" stroke="#666" stroke-width="1"/></svg>
<svg style="left:224px;top:403px;will-change:transform" width="18" height="18" viewBox="0 0 18 18" ><path d="M1.5 9.5Q1 1.5 7 1.2Q13 1.5 12.7 8.6" fill="none" stroke="#666" stroke-width="1"/><path d="M2.2 5H11.8M1.5 8.6H12.7M4.6 5V8.6M9.4 5V8.6M5 2Q6 4 4.6 5M9 2Q8 4 9.4 5" fill="none" stroke="#666" stroke-width="0.9"/><rect x="1.5" y="9.6" width="16" height="8" fill="#fff"/><g fill="none" stroke="#2f6fb5" stroke-width="1.7"><rect x="2.9" y="10.9" width="7.3" height="5.2" rx="2.6"/><rect x="8.8" y="10.9" width="7.3" height="5.2" rx="2.6"/></g><path d="M6.6 14.8L12.4 12.2" stroke="#2f6fb5" stroke-width="1.3"/></svg>
<div class="a" style="left:429px;top:51px;width:136px;height:215px;background:#fff;border:1px solid #c6c6c6;box-sizing:border-box;box-shadow:0 1px 5px rgba(0,0,0,0.3);"></div>
<div class="a" style="left:434px;top:52px;width:129px;height:21px;background:#eeeeee;"></div>
<div class="t" style="left:440.5px;top:54.5px;font-size:12.5px;color:#44546a;letter-spacing:-0.393px;-webkit-text-stroke:0.5px #44546a;">Paste</div>
<div class="a" style="left:434px;top:134px;width:129px;height:21px;background:#eeeeee;"></div>
<div class="t" style="left:440.5px;top:136.5px;font-size:12.5px;color:#44546a;letter-spacing:-0.311px;-webkit-text-stroke:0.5px #44546a;">Paste Values</div>
<div class="a" style="left:434px;top:186px;width:129px;height:21px;background:#eeeeee;"></div>
<div class="t" style="left:440.5px;top:188.5px;font-size:12.5px;color:#44546a;letter-spacing:-0.066px;-webkit-text-stroke:0.5px #44546a;">Other Paste Options</div>
<svg style="left:437px;top:78px;will-change:transform" width="24" height="25" viewBox="0 0 24 25" ><rect x="0" y="2.2" width="18" height="18.8" rx="1.6" fill="#e8be78"/><path d="M3.1 4.7V3.3Q3.1 2.2 4.4 2.1L6.1 1.7Q6.6 0.1 9.1 0.1Q11.6 0.1 12.1 1.7L13.7 2.1Q15 2.2 15 3.3V4.7Z" fill="#fff" stroke="#fff" stroke-width="2.6"/><path fill="#6a6a6a" fill-rule="evenodd" d="M3.1 4.7V3.3Q3.1 2.2 4.4 2.1L6.1 1.7Q6.6 0.1 9.1 0.1Q11.6 0.1 12.1 1.7L13.7 2.1Q15 2.2 15 3.3V4.7ZM8.6 1.1H9.6Q10.3 1.1 10.3 1.8V2.9H7.9V1.8Q7.9 1.1 8.6 1.1Z"/><rect x="9" y="8.3" width="13" height="15" fill="#fff"/><path d="M10.5 9.6H17.6L20.6 12.6V22.4H10.5Z" fill="#fff" stroke="#555" stroke-width="1.1"/><path d="M17.4 9.8V12.8H20.4" fill="none" stroke="#555" stroke-width="1"/></svg>
<svg style="left:467px;top:78px;will-change:transform" width="24" height="25" viewBox="0 0 24 25" ><rect x="0" y="2.2" width="18" height="18.8" rx="1.6" fill="#e8be78"/><rect x="2.7" y="4" width="12.6" height="14.3" fill="#fff"/><rect x="8" y="6.5" width="14" height="17" fill="#fff"/><text x="12" y="18.8" font-family="Liberation Serif, serif" font-style="italic" font-size="17" fill="#4a4a4a">f</text><text x="14.9" y="21.7" font-family="Liberation Serif, serif" font-style="italic" font-size="14" fill="#4a4a4a">x</text><path d="M3.1 4.7V3.3Q3.1 2.2 4.4 2.1L6.1 1.7Q6.6 0.1 9.1 0.1Q11.6 0.1 12.1 1.7L13.7 2.1Q15 2.2 15 3.3V4.7Z" fill="#fff" stroke="#fff" stroke-width="2.6"/><path fill="#6a6a6a" fill-rule="evenodd" d="M3.1 4.7V3.3Q3.1 2.2 4.4 2.1L6.1 1.7Q6.6 0.1 9.1 0.1Q11.6 0.1 12.1 1.7L13.7 2.1Q15 2.2 15 3.3V4.7ZM8.6 1.1H9.6Q10.3 1.1 10.3 1.8V2.9H7.9V1.8Q7.9 1.1 8.6 1.1Z"/></svg>
<svg style="left:497px;top:78px;will-change:transform" width="24" height="25" viewBox="0 0 24 25" ><rect x="0" y="2.2" width="18" height="18.8" rx="1.6" fill="#e8be78"/><rect x="2.7" y="4" width="12.6" height="14.3" fill="#fff"/><rect x="10" y="8" width="13" height="15" fill="#fff"/><text x="14.2" y="19.2" font-family="Liberation Serif, serif" font-style="italic" font-size="17" fill="#4a4a4a">f</text><text x="17.1" y="22.099999999999998" font-family="Liberation Serif, serif" font-style="italic" font-size="14" fill="#4a4a4a">x</text><text x="4.6" y="15.1" font-family="Liberation Sans, sans-serif" font-size="10.5" fill="#333" stroke="#333" stroke-width="0.25">%</text><path d="M3.1 4.7V3.3Q3.1 2.2 4.4 2.1L6.1 1.7Q6.6 0.1 9.1 0.1Q11.6 0.1 12.1 1.7L13.7 2.1Q15 2.2 15 3.3V4.7Z" fill="#fff" stroke="#fff" stroke-width="2.6"/><path fill="#6a6a6a" fill-rule="evenodd" d="M3.1 4.7V3.3Q3.1 2.2 4.4 2.1L6.1 1.7Q6.6 0.1 9.1 0.1Q11.6 0.1 12.1 1.7L13.7 2.1Q15 2.2 15 3.3V4.7ZM8.6 1.1H9.6Q10.3 1.1 10.3 1.8V2.9H7.9V1.8Q7.9 1.1 8.6 1.1Z"/></svg>
<svg style="left:527px;top:78px;will-change:transform" width="24" height="25" viewBox="0 0 24 25" ><rect x="0" y="2.2" width="18" height="18.8" rx="1.6" fill="#e8be78"/><rect x="2.7" y="4" width="12.6" height="14.3" fill="#fff"/><path d="M4.6 7.2H14.2M4.6 13.6H11.6M4.6 16H9.5" stroke="#3e78b8" stroke-width="1" fill="none"/><path d="M4.6 9.6l1.1 1.2l1.1-1.2l1.1 1.2l1.1-1.2l1.1 1.2l1.1-1.2l1.1 1.2l1.1-1.2M4.6 10.8l1.1 1.2l1.1-1.2l1.1 1.2l1.1-1.2l1.1 1.2l1.1-1.2l1.1 1.2l1.1-1.2" stroke="#d2402a" stroke-width="0.8" fill="none"/><path d="M11.5 19L20 6H22V22H11.5Z" fill="#fff"/><path d="M5 23L9 15.5L17 16L15 23Z" fill="#fff"/><g transform="translate(0 0)"><path d="M13.6 14.6L19.2 7.2Q20.2 6.4 20.4 7.6V10.8L16 16.6Z" fill="#6d6d6d"/><path d="M13.2 15.6L14.6 14.3L16.9 16.3L15.9 17.9Z" fill="#8a8a8a"/><path d="M4.6 22.6Q8 20.6 9.3 17.6Q11.2 14.9 14.3 16.1Q16.5 17.9 15.1 20.4Q13.6 22.8 9.5 22.8Z" fill="#3e78b8"/><path d="M11.2 17.4Q12.8 16.6 13.9 17.6Q14.4 18.6 13.6 19.3Q12.8 18 11.2 17.4Z" fill="#fff"/></g><path d="M3.1 4.7V3.3Q3.1 2.2 4.4 2.1L6.1 1.7Q6.6 0.1 9.1 0.1Q11.6 0.1 12.1 1.7L13.7 2.1Q15 2.2 15 3.3V4.7Z" fill="#fff" stroke="#fff" stroke-width="2.6"/><path fill="#6a6a6a" fill-rule="evenodd" d="M3.1 4.7V3.3Q3.1 2.2 4.4 2.1L6.1 1.7Q6.6 0.1 9.1 0.1Q11.6 0.1 12.1 1.7L13.7 2.1Q15 2.2 15 3.3V4.7ZM8.6 1.1H9.6Q10.3 1.1 10.3 1.8V2.9H7.9V1.8Q7.9 1.1 8.6 1.1Z"/></svg>
<svg style="left:437px;top:108px;will-change:transform" width="24" height="25" viewBox="0 0 24 25" ><rect x="0" y="2.2" width="18" height="18.8" rx="1.6" fill="#e8be78"/><rect x="2.7" y="4" width="12.6" height="14.3" fill="#fff"/><rect x="6.6" y="8.6" width="16" height="15" fill="#fff"/><path d="M8 10h1.1v1.1h-1.1zM10 10h1.1v1.1h-1.1zM12 10h1.1v1.1h-1.1zM14 10h1.1v1.1h-1.1zM16 10h1.1v1.1h-1.1zM18 10h1.1v1.1h-1.1zM20 10h1.1v1.1h-1.1zM8 12h1.1v1.1h-1.1zM14 12h1.1v1.1h-1.1zM20 12h1.1v1.1h-1.1zM8 14h1.1v1.1h-1.1zM14 14h1.1v1.1h-1.1zM20 14h1.1v1.1h-1.1zM8 16h1.1v1.1h-1.1zM10 16h1.1v1.1h-1.1zM12 16h1.1v1.1h-1.1zM14 16h1.1v1.1h-1.1zM16 16h1.1v1.1h-1.1zM18 16h1.1v1.1h-1.1zM20 16h1.1v1.1h-1.1zM8 18h1.1v1.1h-1.1zM14 18h1.1v1.1h-1.1zM20 18h1.1v1.1h-1.1zM8 20h1.1v1.1h-1.1zM14 20h1.1v1.1h-1.1zM20 20h1.1v1.1h-1.1zM8 22h1.1v1.1h-1.1zM10 22h1.1v1.1h-1.1zM12 22h1.1v1.1h-1.1zM14 22h1.1v1.1h-1.1zM16 22h1.1v1.1h-1.1zM18 22h1.1v1.1h-1.1zM20 22h1.1v1.1h-1.1z" fill="#555"/><path d="M3.1 4.7V3.3Q3.1 2.2 4.4 2.1L6.1 1.7Q6.6 0.1 9.1 0.1Q11.6 0.1 12.1 1.7L13.7 2.1Q15 2.2 15 3.3V4.7Z" fill="#fff" stroke="#fff" stroke-width="2.6"/><path fill="#6a6a6a" fill-rule="evenodd" d="M3.1 4.7V3.3Q3.1 2.2 4.4 2.1L6.1 1.7Q6.6 0.1 9.1 0.1Q11.6 0.1 12.1 1.7L13.7 2.1Q15 2.2 15 3.3V4.7ZM8.6 1.1H9.6Q10.3 1.1 10.3 1.8V2.9H7.9V1.8Q7.9 1.1 8.6 1.1Z"/></svg>
<svg style="left:467px;top:108px;will-change:transform" width="24" height="25" viewBox="0 0 24 25" ><rect x="0" y="2.2" width="18" height="18.8" rx="1.6" fill="#e8be78"/><rect x="2.7" y="4" width="12.6" height="14.3" fill="#fff"/><rect x="6" y="8.6" width="16" height="15" fill="#fff"/><path d="M7.4 12.3H12.2M15.6 12.3H20.4" stroke="#3e78b8" stroke-width="1.4" fill="none"/><path d="M9.8 9.9L7.2 12.3L9.8 14.7M18 9.9L20.6 12.3L18 14.7" fill="none" stroke="#3e78b8" stroke-width="1.4"/><path d="M9.2 23V17.5H19V23" fill="none" stroke="#555" stroke-width="1.2"/><path d="M3.1 4.7V3.3Q3.1 2.2 4.4 2.1L6.1 1.7Q6.6 0.1 9.1 0.1Q11.6 0.1 12.1 1.7L13.7 2.1Q15 2.2 15 3.3V4.7Z" fill="#fff" stroke="#fff" stroke-width="2.6"/><path fill="#6a6a6a" fill-rule="evenodd" d="M3.1 4.7V3.3Q3.1 2.2 4.4 2.1L6.1 1.7Q6.6 0.1 9.1 0.1Q11.6 0.1 12.1 1.7L13.7 2.1Q15 2.2 15 3.3V4.7ZM8.6 1.1H9.6Q10.3 1.1 10.3 1.8V2.9H7.9V1.8Q7.9 1.1 8.6 1.1Z"/></svg>
<svg style="left:497px;top:108px;will-change:transform" width="24" height="25" viewBox="0 0 24 25" ><rect x="0" y="2.2" width="18" height="18.8" rx="1.6" fill="#e8be78"/><rect x="2.7" y="4" width="12.6" height="14.3" fill="#fff"/><rect x="5.5" y="7.5" width="17" height="16" fill="#fff"/><path d="M8.6 15.2Q8.7 11 13.6 10.5" fill="none" stroke="#3e78b8" stroke-width="1.4"/><path d="M12.5 8.4L14.9 10.5L12.9 12.6" fill="none" stroke="#3e78b8" stroke-width="1.4"/><path d="M6.3 14L8.6 16.4L10.7 14" fill="none" stroke="#3e78b8" stroke-width="1.4"/><rect x="16.6" y="9.6" width="3.7" height="7.3" fill="#fff" stroke="#555" stroke-width="1.2"/><rect x="17.2" y="10.2" width="2.5" height="2.8" fill="#8eb4e3"/><path d="M16.6 13.3H20.3" stroke="#555" stroke-width="1.1"/><rect x="6.6" y="18.7" width="7.9" height="3.5" fill="#fff" stroke="#555" stroke-width="1.2"/><rect x="7.2" y="19.3" width="3" height="2.3" fill="#8eb4e3"/><path d="M10.6 18.7V22.2" stroke="#555" stroke-width="1.1"/><rect x="16" y="18.6" width="2" height="2.8" fill="#e8be78"/><path d="M3.1 4.7V3.3Q3.1 2.2 4.4 2.1L6.1 1.7Q6.6 0.1 9.1 0.1Q11.6 0.1 12.1 1.7L13.7 2.1Q15 2.2 15 3.3V4.7Z" fill="#fff" stroke="#fff" stroke-width="2.6"/><path fill="#6a6a6a" fill-rule="evenodd" d="M3.1 4.7V3.3Q3.1 2.2 4.4 2.1L6.1 1.7Q6.6 0.1 9.1 0.1Q11.6 0.1 12.1 1.7L13.7 2.1Q15 2.2 15 3.3V4.7ZM8.6 1.1H9.6Q10.3 1.1 10.3 1.8V2.9H7.9V1.8Q7.9 1.1 8.6 1.1Z"/></svg>
<svg style="left:437px;top:160px;will-change:transform" width="24" height="25" viewBox="0 0 24 25" ><rect x="0" y="2.2" width="18" height="18.8" rx="1.6" fill="#e8be78"/><rect x="2.7" y="4" width="12.6" height="14.3" fill="#fff"/><rect x="5.3" y="12.8" width="17" height="11.2" fill="#fff"/><text x="5.1" y="22.9" font-family="Liberation Sans, sans-serif" font-size="10" fill="#333" stroke="#333" stroke-width="0.5" letter-spacing="-0.3">123</text><path d="M3.1 4.7V3.3Q3.1 2.2 4.4 2.1L6.1 1.7Q6.6 0.1 9.1 0.1Q11.6 0.1 12.1 1.7L13.7 2.1Q15 2.2 15 3.3V4.7Z" fill="#fff" stroke="#fff" stroke-width="2.6"/><path fill="#6a6a6a" fill-rule="evenodd" d="M3.1 4.7V3.3Q3.1 2.2 4.4 2.1L6.1 1.7Q6.6 0.1 9.1 0.1Q11.6 0.1 12.1 1.7L13.7 2.1Q15 2.2 15 3.3V4.7ZM8.6 1.1H9.6Q10.3 1.1 10.3 1.8V2.9H7.9V1.8Q7.9 1.1 8.6 1.1Z"/></svg>
<svg style="left:467px;top:160px;will-change:transform" width="24" height="25" viewBox="0 0 24 25" ><rect x="0" y="2.2" width="18" height="18.8" rx="1.6" fill="#e8be78"/><rect x="2.7" y="4" width="12.6" height="14.3" fill="#fff"/><rect x="5.3" y="12.8" width="17" height="11.2" fill="#fff"/><text x="5.1" y="22.9" font-family="Liberation Sans, sans-serif" font-size="10" fill="#333" stroke="#333" stroke-width="0.5" letter-spacing="-0.3">123</text><text x="4.4" y="14" font-family="Liberation Sans, sans-serif" font-size="10.5" fill="#333" stroke="#333" stroke-width="0.25">%</text><path d="M3.1 4.7V3.3Q3.1 2.2 4.4 2.1L6.1 1.7Q6.6 0.1 9.1 0.1Q11.6 0.1 12.1 1.7L13.7 2.1Q15 2.2 15 3.3V4.7Z" fill="#fff" stroke="#fff" stroke-width="2.6"/><path fill="#6a6a6a" fill-rule="evenodd" d="M3.1 4.7V3.3Q3.1 2.2 4.4 2.1L6.1 1.7Q6.6 0.1 9.1 0.1Q11.6 0.1 12.1 1.7L13.7 2.1Q15 2.2 15 3.3V4.7ZM8.6 1.1H9.6Q10.3 1.1 10.3 1.8V2.9H7.9V1.8Q7.9 1.1 8.6 1.1Z"/></svg>
<svg style="left:497px;top:160px;will-change:transform" width="24" height="25" viewBox="0 0 24 25" ><rect x="0" y="2.2" width="18" height="18.8" rx="1.6" fill="#e8be78"/><rect x="2.7" y="4" width="12.6" height="14.3" fill="#fff"/><rect x="12" y="3" width="8" height="12" fill="#fff"/><rect x="5.3" y="14.8" width="17" height="9.2" fill="#fff"/><text x="5.1" y="22.9" font-family="Liberation Sans, sans-serif" font-size="10" fill="#333" stroke="#333" stroke-width="0.5" letter-spacing="-0.3">123</text><path d="M12.2 8.6L16.8 2.7Q17.8 1.8 18 3V6.4L14.4 10.6Z" fill="#6d6d6d"/><path d="M4.8 15Q7.8 13.2 8.7 10.8Q10.2 8 13 9.1Q15.4 10.9 14.1 13Q12.8 15 9 15Z" fill="#3e78b8"/><path d="M10.3 10.4Q11.8 9.7 12.8 10.7Q13.2 11.6 12.5 12.3Q11.7 11.1 10.3 10.4Z" fill="#fff"/><path d="M3.1 4.7V3.3Q3.1 2.2 4.4 2.1L6.1 1.7Q6.6 0.1 9.1 0.1Q11.6 0.1 12.1 1.7L13.7 2.1Q15 2.2 15 3.3V4.7Z" fill="#fff" stroke="#fff" stroke-width="2.6"/><path fill="#6a6a6a" fill-rule="evenodd" d="M3.1 4.7V3.3Q3.1 2.2 4.4 2.1L6.1 1.7Q6.6 0.1 9.1 0.1Q11.6 0.1 12.1 1.7L13.7 2.1Q15 2.2 15 3.3V4.7ZM8.6 1.1H9.6Q10.3 1.1 10.3 1.8V2.9H7.9V1.8Q7.9 1.1 8.6 1.1Z"/></svg>
<svg style="left:438px;top:212px;will-change:transform" width="24" height="25" viewBox="0 0 24 25" ><rect x="0" y="2.2" width="18" height="18.8" rx="1.6" fill="#e8be78"/><rect x="2.7" y="4" width="12.6" height="14.3" fill="#fff"/><text x="4.5" y="15" font-family="Liberation Sans, sans-serif" font-size="10.5" fill="#333" stroke="#333" stroke-width="0.25">%</text><path d="M11.5 19L20 6H22V22H11.5Z" fill="#fff"/><path d="M5 23L9 15.5L17 16L15 23Z" fill="#fff"/><g transform="translate(0 0)"><path d="M13.6 14.6L19.2 7.2Q20.2 6.4 20.4 7.6V10.8L16 16.6Z" fill="#6d6d6d"/><path d="M13.2 15.6L14.6 14.3L16.9 16.3L15.9 17.9Z" fill="#8a8a8a"/><path d="M4.6 22.6Q8 20.6 9.3 17.6Q11.2 14.9 14.3 16.1Q16.5 17.9 15.1 20.4Q13.6 22.8 9.5 22.8Z" fill="#3e78b8"/><path d="M11.2 17.4Q12.8 16.6 13.9 17.6Q14.4 18.6 13.6 19.3Q12.8 18 11.2 17.4Z" fill="#fff"/></g><path d="M3.1 4.7V3.3Q3.1 2.2 4.4 2.1L6.1 1.7Q6.6 0.1 9.1 0.1Q11.6 0.1 12.1 1.7L13.7 2.1Q15 2.2 15 3.3V4.7Z" fill="#fff" stroke="#fff" stroke-width="2.6"/><path fill="#6a6a6a" fill-rule="evenodd" d="M3.1 4.7V3.3Q3.1 2.2 4.4 2.1L6.1 1.7Q6.6 0.1 9.1 0.1Q11.6 0.1 12.1 1.7L13.7 2.1Q15 2.2 15 3.3V4.7ZM8.6 1.1H9.6Q10.3 1.1 10.3 1.8V2.9H7.9V1.8Q7.9 1.1 8.6 1.1Z"/></svg>
<svg style="left:467px;top:212px;will-change:transform" width="24" height="25" viewBox="0 0 24 25" ><rect x="0" y="2.2" width="18" height="18.8" rx="1.6" fill="#e8be78"/><rect x="2.7" y="4" width="12.6" height="14.3" fill="#fff"/><rect x="5.4" y="14.8" width="17" height="9" fill="#fff"/><g transform="translate(0 0)" fill="none" stroke="#2f6fb5" stroke-width="1.75"><rect x="7.3" y="16.6" width="7.4" height="5.2" rx="2.6"/><rect x="13.1" y="16.6" width="7.4" height="5.2" rx="2.6"/></g><path d="M10.8 20.7L17 17.7" stroke="#2f6fb5" stroke-width="1.4"/><path d="M3.1 4.7V3.3Q3.1 2.2 4.4 2.1L6.1 1.7Q6.6 0.1 9.1 0.1Q11.6 0.1 12.1 1.7L13.7 2.1Q15 2.2 15 3.3V4.7Z" fill="#fff" stroke="#fff" stroke-width="2.6"/><path fill="#6a6a6a" fill-rule="evenodd" d="M3.1 4.7V3.3Q3.1 2.2 4.4 2.1L6.1 1.7Q6.6 0.1 9.1 0.1Q11.6 0.1 12.1 1.7L13.7 2.1Q15 2.2 15 3.3V4.7ZM8.6 1.1H9.6Q10.3 1.1 10.3 1.8V2.9H7.9V1.8Q7.9 1.1 8.6 1.1Z"/></svg>
<svg style="left:497px;top:212px;will-change:transform" width="24" height="25" viewBox="0 0 24 25" ><rect x="0" y="2.2" width="18" height="18.8" rx="1.6" fill="#e8be78"/><rect x="2.7" y="4" width="12.6" height="14.3" fill="#fff"/><rect x="7.1" y="8.9" width="14.7" height="15.7" fill="#fff"/><rect x="8.7" y="10.5" width="11.5" height="12.5" fill="#fff" stroke="#555" stroke-width="1.2"/><circle cx="16.599999999999998" cy="13.7" r="1.35" fill="#e8b566"/><path d="M10.299999999999999 21.0L13.299999999999999 16.4L15.7 20.0L16.9 18.0L18.8 21.0Z" fill="#3e78b8"/><path d="M3.1 4.7V3.3Q3.1 2.2 4.4 2.1L6.1 1.7Q6.6 0.1 9.1 0.1Q11.6 0.1 12.1 1.7L13.7 2.1Q15 2.2 15 3.3V4.7Z" fill="#fff" stroke="#fff" stroke-width="2.6"/><path fill="#6a6a6a" fill-rule="evenodd" d="M3.1 4.7V3.3Q3.1 2.2 4.4 2.1L6.1 1.7Q6.6 0.1 9.1 0.1Q11.6 0.1 12.1 1.7L13.7 2.1Q15 2.2 15 3.3V4.7ZM8.6 1.1H9.6Q10.3 1.1 10.3 1.8V2.9H7.9V1.8Q7.9 1.1 8.6 1.1Z"/></svg>
<svg style="left:527px;top:212px;will-change:transform" width="24" height="25" viewBox="0 0 24 25" ><rect x="0" y="2.2" width="18" height="18.8" rx="1.6" fill="#e8be78"/><rect x="2.7" y="4" width="12.6" height="14.3" fill="#fff"/><rect x="7.0" y="5.1" width="14.8" height="14.7" fill="#fff"/><rect x="8.6" y="6.7" width="11.6" height="11.5" fill="#fff" stroke="#555" stroke-width="1.2"/><circle cx="16.599999999999998" cy="9.9" r="1.35" fill="#e8b566"/><path d="M10.2 16.2L13.2 11.6L15.6 15.2L16.799999999999997 13.2L18.8 16.2Z" fill="#3e78b8"/><rect x="3.1000000000000005" y="14.3" width="17" height="9" fill="#fff"/><g transform="translate(-2.3 -0.5)" fill="none" stroke="#2f6fb5" stroke-width="1.75"><rect x="7.3" y="16.6" width="7.4" height="5.2" rx="2.6"/><rect x="13.1" y="16.6" width="7.4" height="5.2" rx="2.6"/></g><path d="M8.5 20.2L14.7 17.2" stroke="#2f6fb5" stroke-width="1.4"/><path d="M3.1 4.7V3.3Q3.1 2.2 4.4 2.1L6.1 1.7Q6.6 0.1 9.1 0.1Q11.6 0.1 12.1 1.7L13.7 2.1Q15 2.2 15 3.3V4.7Z" fill="#fff" stroke="#fff" stroke-width="2.6"/><path fill="#6a6a6a" fill-rule="evenodd" d="M3.1 4.7V3.3Q3.1 2.2 4.4 2.1L6.1 1.7Q6.6 0.1 9.1 0.1Q11.6 0.1 12.1 1.7L13.7 2.1Q15 2.2 15 3.3V4.7ZM8.6 1.1H9.6Q10.3 1.1 10.3 1.8V2.9H7.9V1.8Q7.9 1.1 8.6 1.1Z"/></svg>
<div class="a" style="left:431px;top:240px;width:133px;height:23px;background:#c6c6c6;"></div>
<div class="t" style="left:463px;top:244px;font-size:12px;color:#262626;letter-spacing:-0.430px;">Paste <u>S</u>pecial...</div>
<div class="a" style="left:564px;top:241px;width:125px;height:23px;background:#fff;border-top:1px solid #c6c6c6;border-bottom:1px solid #c6c6c6;border-left:1px solid #d8d8d8;box-sizing:border-box;box-shadow:0 2px 3px rgba(0,0,0,0.25);"></div>
<div class="a" style="left:565px;top:242px;width:124px;height:21px;overflow:hidden;"><div class="t" style="left:3.5px;top:2.5px;font-size:12px;color:#444;"><span style="letter-spacing:-0.57px">Paste Special</span><span style="letter-spacing:0.9px"> </span>(Ctrl+Alt+V)</div></div>
<div class="a" style="left:689px;top:0px;width:11px;height:613px;background:#fff;"></div>
<div class="a" style="left:209px;top:45px;width:225px;height:33px;box-sizing:border-box;border:3px solid #e8131f;"></div>
<div class="a" style="left:422px;top:235px;width:277px;height:42px;box-sizing:border-box;border:3px solid #e8131f;"></div>
</body></html>
